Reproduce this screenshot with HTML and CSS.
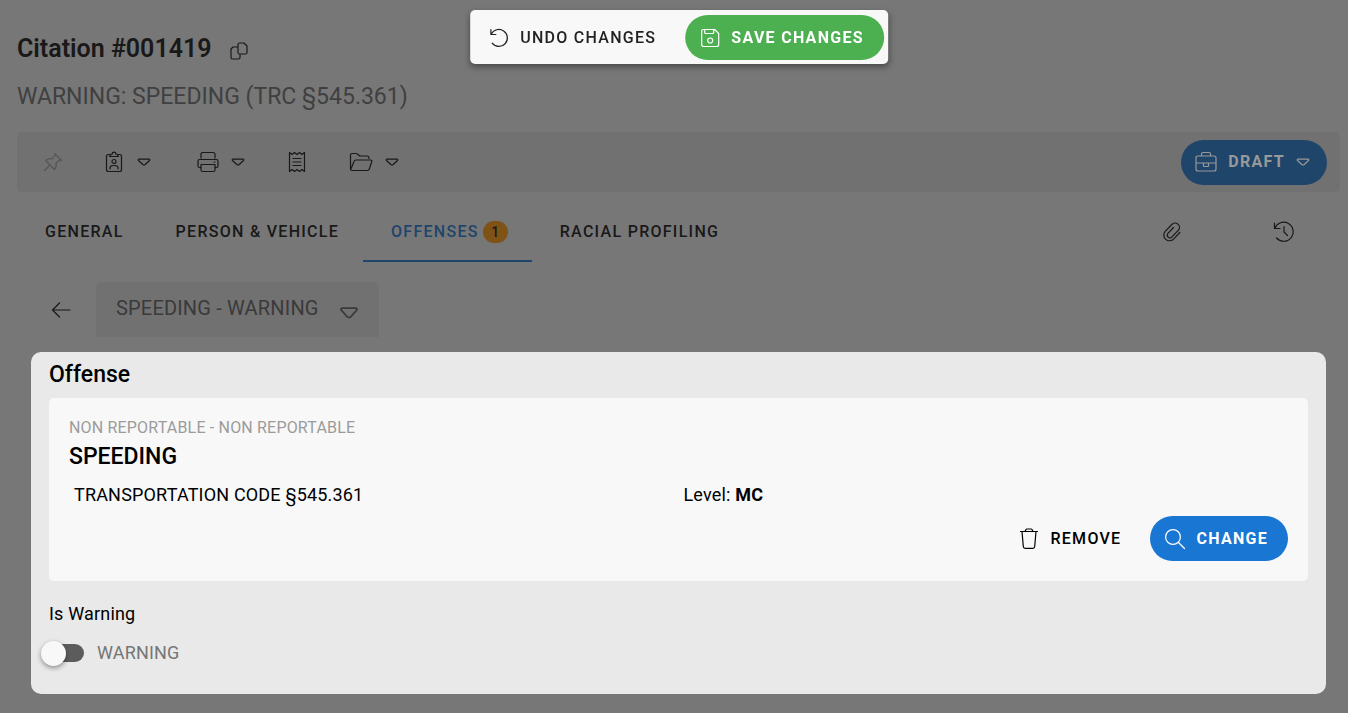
FILE: index.html
```html
<!DOCTYPE html>
<html lang="en">
<head>
<meta charset="utf-8">
<title>Citation #001419</title>
<link rel="stylesheet" href="styles.css">
</head>
<body>
<svg class="sprite" aria-hidden="true">
  <symbol id="caret" viewBox="0 0 14 10"><path d="M2 2.200h10q1.300.2.5 1.300L8.200 7.500q-1.200.9-2.400 0L1.500 3.500Q.7 2.400 2 2.200z"/></symbol>
</svg>

<div class="save-bar">
  <button class="btn undo" type="button">
    <svg class="icon" viewBox="0 0 20 20"><path d="M1.700 1.500v5h5M2 6.300A8.500 8.500 0 1 1 3 15.200"/></svg>
    Undo changes
  </button>
  <button class="btn pill green" type="button">
    <svg class="icon" viewBox="0 0 20 20"><path d="M3.500 1.500h11l4 4v11q0 2-2 2h-13q-2 0-2-2v-13q0-2 2-2zM4.500 1.500v3q0 1 1 1h7q1 0 1-1v-3"/><circle cx="10" cy="12.500" r="2.500"/></svg>
    Save changes
  </button>
</div>

<main class="page">
  <header class="title">
    <h1>Citation #001419</h1>
    <button class="icon-btn" type="button" aria-label="Copy">
      <svg class="copy" viewBox="0 0 18 18"><path d="M9.500 1h4.500l3 3v6.500q0 1.500-1.500 1.500h-6q-1.500 0-1.500-1.500v-8Q8 1 9.500 1zM8 5H3L1 7v8.500Q1 17 2.500 17h6q1.500 0 1.500-1.500V12"/></svg>
    </button>
  </header>
  <p class="subtitle">WARNING: SPEEDING (TRC §545.361)</p>

  <div class="toolbar">
    <button class="tool faint" type="button" aria-label="Pin">
      <svg class="pin" viewBox="0 0 20 20"><path d="M11.500 1.500l7 7M12.500 2.500l-3.500 4.500q-3-1-6.500 1.500l9 9q2.500-3.500 1.500-6.500l4.500-3.500M7 13l-5.500 5.500"/></svg>
    </button>
    <button class="tool person" type="button" aria-label="Identification">
      <svg class="tall" viewBox="0 0 18 22"><path d="M5.500 3.500H3.500q-2 0-2 2v13q0 2 2 2h11q2 0 2-2v-13q0-2-2-2h-2M4.500 5.500l2-2.500h.700a1.800 1.800 0 0 1 3.600 0h.700l2 2.500zM5 18v-1.500q.5-2 3-2h2q2.500 0 3 2V18"/><circle cx="9" cy="10.500" r="2"/></svg>
      <svg class="caret"><use href="#caret"/></svg>
    </button>
    <button class="tool" type="button" aria-label="Print">
      <svg class="wide" viewBox="0 0 22 22"><path d="M4 7V3.500q0-2 2-2h10q2 0 2 2V7M4 16.500H2.500q-1.500 0-1.500-1.500v-5q0-1.500 1.500-1.500h17q1.500 0 1.500 1.500v5q0 1.500-1.500 1.500H18M4 13.500h14V19q0 1.500-1.500 1.500h-11Q4 20.500 4 19zM17 11h1"/></svg>
      <svg class="caret"><use href="#caret"/></svg>
    </button>
    <button class="tool" type="button" aria-label="Receipt">
      <svg class="tall" viewBox="0 0 18 22"><path d="M1.500 1.500l2.500 2L6.500 1.500 9 3.500l2.500-2 2.500 2 2.500-2v19l-2.500-2-2.500 2-2.500-2-2.500 2-2.500-2-2.500 2zM5 7.500h8M5 11h8M5 14.500h8"/></svg>
    </button>
    <button class="tool" type="button" aria-label="Folder">
      <svg class="folder-icon" viewBox="0 0 24 20"><path d="M1.500 17V3q0-1.500 1.500-1.500h4q1 0 2 1l1 1q.5.500 1.500.5H18q2 0 2 2.500M1.700 17.500L5 9.500q.5-1.500 2-1.500h14.500q1.800 0 1.200 1.800l-2.200 6.700q-.6 2-2.500 2H3q-1.500 0-1.500-1.500"/></svg>
      <svg class="caret"><use href="#caret"/></svg>
    </button>
    <button class="btn pill draft" type="button">
      <svg class="wide" viewBox="0 0 22 22"><path d="M3 5h16q2 0 2 2v11q0 2-2 2H3q-2 0-2-2V7q0-2 2-2zM6.500 5V3q0-1.500 1.500-1.500h6q1.500 0 1.500 1.500v2M1 12h20M8.500 12v3q0 .5.500.5h4q.5 0 .5-.5v-3"/></svg>
      Draft
      <svg class="caret"><use href="#caret"/></svg>
    </button>
  </div>

  <nav class="tabs">
    <a href="#general">General</a>
    <a href="#person">Person &amp; Vehicle</a>
    <a class="active" href="#offenses">Offenses<span class="badge">1</span></a>
    <a href="#racial">Racial Profiling</a>
    <a class="icon-tab push" href="#files" aria-label="Attachments">
      <svg class="clip" viewBox="0 0 20 20"><path d="M17.800 10.500l-6 6.300a5.700 5.700 0 0 1-8.600-7.500l6.600-6.800a4.400 4.400 0 0 1 6.700 5.700l-6.800 7a2.700 2.700 0 0 1-4-3.500L11.500 5.500"/></svg>
    </a>
    <a class="icon-tab" href="#history" aria-label="History">
      <svg class="wide" viewBox="0 0 22 22"><path d="M1.500 2v5.500H7M1.800 7.300A9.500 9.500 0 1 1 3.500 17M11 5.500V11l3.500 3.500"/></svg>
    </a>
  </nav>

  <div class="picker-row">
    <button class="icon-btn" type="button" aria-label="Back">
      <svg class="back" viewBox="0 0 20 16"><path d="M8.500 1L1.500 8l7 7M1.500 8H19"/></svg>
    </button>
    <div class="picker">
      <select aria-label="Offense">
        <option>SPEEDING - WARNING</option>
      </select>
      <svg class="picker-caret" viewBox="0 0 14 10"><path d="M2 2.200h10q1.300.2.500 1.500L8.200 8.500q-1.200.9-2.400 0L1.500 3.700Q.7 2.400 2 2.200z"/></svg>
    </div>
  </div>

  <section class="panel">
    <h2>Offense</h2>
    <div class="card">
      <p class="category">NON REPORTABLE - NON REPORTABLE</p>
      <h3>SPEEDING</h3>
      <div class="details">
        <span>TRANSPORTATION CODE §545.361</span>
        <span>Level: <b>MC</b></span>
      </div>
      <div class="actions">
        <button class="btn remove" type="button">
          <svg class="icon" viewBox="1 1 18 20"><path d="M1.500 3.500h17M6 3.500l1-2q.3-.5 1-.5h4q.7 0 1 .5l1 2M3 3.500l1.300 15q.2 1.800 1.800 1.800h7.800q1.600 0 1.800-1.800l1.300-15"/></svg>
          Remove
        </button>
        <button class="btn pill blue" type="button">
          <svg class="icon" viewBox="0 0 20 20"><circle cx="8" cy="8" r="7.400"/><path d="M13.500 13.500l6 6"/></svg>
          Change
        </button>
      </div>
    </div>
    <p class="field-name">Is Warning</p>
    <label class="switch"><input type="checkbox">WARNING</label>
  </section>
</main>
</body>
</html>
```
FILE: styles.css
```css
* { box-sizing: border-box; }

body {
  margin: 0;
  background: #777;
  color: #191919;
  font: 18px/24px Roboto, sans-serif;
  letter-spacing: 0.01em;
}

h1, h2, h3, p { margin: 0; }

button, select, input { margin: 0; font: inherit; color: inherit; letter-spacing: inherit; }

button {
  border: 0;
  padding: 0;
  background: none;
}

svg {
  flex: none;
  overflow: visible;
  fill: none;
  stroke: currentColor;
  stroke-width: 1.2;
  stroke-linecap: round;
  stroke-linejoin: round;
}

.sprite { position: absolute; width: 0; height: 0; }
.icon { width: 20px; height: 20px; }
.tall { width: 18px; height: 22px; }
.wide { width: 22px; height: 22px; }
.caret { width: 14px; height: 10px; }
.copy { width: 18px; height: 18px; }
.pin { width: 20px; height: 20px; }
.clip { width: 20px; height: 20px; }
.back { width: 20px; height: 16px; }
.folder-icon { width: 24px; height: 20px; }

.btn {
  display: flex;
  align-items: center;
  gap: 11px;
  height: 45px;
  padding: 0 20px 0 15px;
  font-size: 16px;
  font-weight: 500;
  letter-spacing: 0.08em;
  text-transform: uppercase;
  white-space: nowrap;
}

.pill {
  border-radius: 23px;
  color: #fff;
  font-weight: 700;
}

.green { background: #4caf50; }
.blue { background: #1976d2; }

.save-bar {
  position: fixed;
  top: 10px;
  left: calc(50% + 5px);
  transform: translateX(-50%);
  display: flex;
  gap: 13px;
  padding: 5px 4px 4px;
  border-radius: 5px;
  background: #f8f8f8;
  box-shadow: 0 3px 6px rgba(0, 0, 0, 0.4);
}

.undo { color: #222; padding-right: 16px; }

.page { padding: 33px 8px 19px 17px; }

.title {
  display: flex;
  align-items: center;
  gap: 18px;
  height: 32px;
}

h1 {
  font-size: 25px;
  font-weight: 600;
  line-height: 32px;
  letter-spacing: 0;
}

.icon-btn { display: flex; }
.title .icon-btn { margin-top: 3px; }

.subtitle {
  margin-top: 16px;
  color: #404040;
  font-size: 23px;
  line-height: 32px;
  letter-spacing: 0;
}

.toolbar {
  display: flex;
  align-items: center;
  height: 60px;
  margin-top: 19px;
  padding: 0 13px 0 26px;
  border-radius: 5px;
  background: #717171;
}

.tool {
  display: flex;
  align-items: center;
  gap: 12px;
  margin-right: 43px;
}

.person { gap: 14px; margin-right: 46px; }

.faint { margin-right: 42px; color: #555; }

.draft {
  margin-left: auto;
  padding: 0 17px 0 14px;
  background: #1f456b;
  color: #999;
}

.tabs {
  display: flex;
  height: 70px;
}

.tabs a {
  display: flex;
  align-items: center;
  gap: 4px;
  padding: 11px 24px 0 28px;
  border-bottom: 2px solid transparent;
  color: inherit;
  font-size: 16px;
  font-weight: 500;
  line-height: 22px;
  letter-spacing: 0.08em;
  text-decoration: none;
  text-transform: uppercase;
  white-space: nowrap;
}

.tabs .active { color: #1f456b; border-color: #1f456b; }

.badge {
  min-width: 25px;
  border-radius: 11px;
  background: #7f5316;
  color: #191919;
  font-size: 14px;
  letter-spacing: 0;
  text-align: center;
}

.tabs .icon-tab { width: 112px; padding-right: 28px; padding-left: 28px; justify-content: center; }
.tabs .push { margin-left: auto; }

.picker-row {
  display: flex;
  align-items: center;
  gap: 25px;
  margin-top: 20px;
  padding-left: 34px;
}

.picker {
  display: grid;
  align-items: center;
  border-radius: 5px 5px 0 0;
  background: #717171;
  color: #3a3a3a;
}

.picker > * { grid-area: 1 / 1; }

.picker select {
  appearance: none;
  height: 55px;
  padding: 0 60px 3px 20px;
  border: 0;
  background: none;
  font-size: 20px;
}

.picker-caret {
  justify-self: end;
  width: 20px;
  height: 14px;
  margin: 4px 20px 0 0;
  pointer-events: none;
}

.panel {
  margin: 15px 14px 0;
  padding: 9px 18px 29px;
  border-radius: 10px;
  background: #e9e9e9;
  color: #000;
}

h2, h3 {
  font-size: 23px;
  font-weight: 500;
  line-height: 28px;
  letter-spacing: 0;
}

.card {
  margin-top: 9px;
  padding: 18px 20px 20px;
  border-radius: 5px;
  background: #f8f8f8;
}

.category { color: #9b9b9b; font-size: 16px; }

.card h3 { margin-top: 3px; }

.details {
  display: grid;
  grid-template-columns: 1fr 1fr;
  margin-top: 12px;
}

.details span { padding-left: 5px; }

.details b { font-weight: 700; }

.actions {
  display: flex;
  justify-content: flex-end;
  gap: 9px;
  margin-top: 9px;
}

.field-name { margin-top: 21px; }

.switch {
  display: flex;
  align-items: center;
  gap: 13px;
  width: max-content;
  margin-top: 15px;
  color: #757575;
}

.switch input {
  display: flex;
  align-items: center;
  appearance: none;
  width: 35px;
  height: 18px;
  border-radius: 9px;
  background: #5c5c5c;
}

.switch input::before {
  content: "";
  flex: none;
  width: 25px;
  height: 25px;
  margin-left: -8px;
  border-radius: 50%;
  background: #f8f8f8;
  box-shadow: 0 2px 5px rgba(0, 0, 0, 0.4);
}
```
